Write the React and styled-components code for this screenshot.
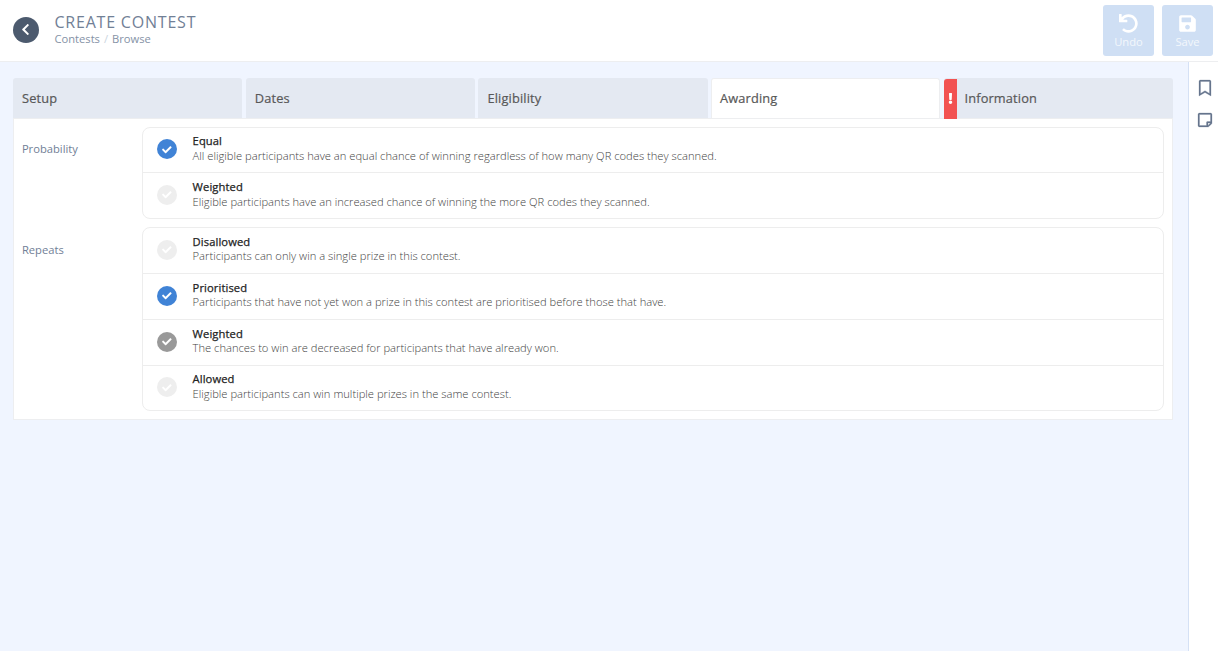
import React from 'react'
import styled, { createGlobalStyle } from 'styled-components'
import {
  FaCheck,
  FaChevronLeft,
  FaExclamation,
  FaRegBookmark,
  FaRegStickyNote,
  FaSave,
  FaUndo,
} from 'react-icons/fa'

const GlobalStyle = createGlobalStyle`
  * {
    box-sizing: border-box;
  }

  body {
    margin: 0;
    background: #f0f5ff;
    font-family: 'Open Sans', sans-serif;
    font-size: 11.2px;
    color: #718096;
  }
`

const Page = styled.div`
  display: flex;
  flex-direction: column;
  height: 100vh;
  overflow: hidden;
`

const Header = styled.header`
  display: flex;
  align-items: center;
  flex: none;
  height: 61.6px;
  padding: 0 5px 0 12.8px;
  background: white;
  border-bottom: 1px solid #edeef0;
`

const BackButton = styled.button`
  display: flex;
  align-items: center;
  justify-content: center;
  width: 26px;
  height: 26px;
  margin: 0 15.6px 1px 0;
  padding: 0 1px 1px 0;
  border: none;
  border-radius: 50%;
  background: #4c5a6e;
  color: white;
  font-size: 13px;
`

const Heading = styled.div`
  flex: 1;
  padding-bottom: 1px;
`

const Title = styled.h1`
  margin: 0;
  font-size: 16px;
  font-weight: 400;
  line-height: 18px;
  letter-spacing: 0.8px;
  text-transform: uppercase;
  color: #718096;
`

const Breadcrumb = styled.nav`
  display: flex;
  gap: 4px;
  font-size: 11.2px;
  line-height: 15px;
  color: #8592a6;
`

const Separator = styled.span`
  color: #cbd5e0;
`

const Actions = styled.div`
  display: flex;
  gap: 8px;
`

const ActionButton = styled.button`
  display: flex;
  flex-direction: column;
  align-items: center;
  width: 51px;
  height: 51px;
  padding: 9px 0 0;
  border: none;
  border-radius: 3px;
  background: #cfdff4;
  color: white;
  font-family: inherit;
  font-size: 11.2px;
  line-height: 15px;

  svg {
    margin-bottom: 1px;
    font-size: 19px;
  }

  span {
    opacity: 0.75;
  }
`

const Body = styled.div`
  display: flex;
  flex: 1;
`

const Main = styled.main`
  flex: 1;
  padding: 16px 15.1px 0 12.9px;
`

const Sidebar = styled.aside`
  display: flex;
  flex-direction: column;
  align-items: center;
  gap: 16px;
  width: 30px;
  padding: 18.4px 0 0 3px;
  border-left: 1px solid #d5e1f5;
  background: white;
  color: #66758d;
  font-size: 16px;

  svg {
    stroke: currentColor;
    stroke-width: 8px;
    overflow: visible;
  }
`

const Tabs = styled.div`
  display: grid;
  grid-template-columns: repeat(5, 1fr);
  gap: 3.5px;
`

const Tab = styled.div`
  display: flex;
  align-items: center;
  height: 40px;
  padding-left: ${(props) => (props.$alert ? '0' : props.$active ? '8px' : '9.2px')};
  border: ${(props) => (props.$active ? '1px solid #edeef0' : 'none')};
  border-bottom: none;
  border-radius: 3px 3px 0 0;
  background: ${(props) => (props.$active ? 'white' : '#e4e9f2')};
  color: #585858;
  font-size: 12.8px;
  letter-spacing: 0.14px;
  line-height: 18px;
  padding-bottom: ${(props) => (props.$active ? '1px' : '0')};
  -webkit-text-stroke: 0.2px currentColor;
`

const Alert = styled.span`
  display: flex;
  align-items: center;
  justify-content: center;
  align-self: stretch;
  width: 13px;
  margin: 1px 7.8px -1px 0;
  border-radius: 3px 0 0 0;
  background: #f25252;
  color: white;
  font-size: 11px;
`

const Panel = styled.div`
  display: flex;
  flex-direction: column;
  gap: 8px;
  padding: 8px;
  border: 1px solid #edeef0;
  background: white;
`

const Field = styled.div`
  display: grid;
  grid-template-columns: 120px 1fr;
`

const Label = styled.div`
  padding-top: 14.6px;
  line-height: 15px;
`

const Options = styled.div`
  border: 1px solid #ededed;
  border-radius: 8px;
`

const Option = styled.div`
  display: flex;
  align-items: center;
  height: 44.8px;
  padding: 0 0 1.3px 14.3px;

  & + & {
    height: 45.8px;
    border-top: 1px solid #ededed;
  }
`

const circleColors = {
  on: '#4083d6',
  implied: '#999999',
  off: '#eeeeee',
}

const Circle = styled.span`
  display: flex;
  align-items: center;
  justify-content: center;
  width: 20px;
  height: 20px;
  margin-right: 15.4px;
  border-radius: 50%;
  background: ${(props) => circleColors[props.$state]};
  color: white;
  font-size: 9.6px;
`

const OptionBody = styled.div`
  padding-bottom: 1.9px;
`

const OptionTitle = styled.div`
  margin-bottom: 0.4px;
  color: #222;
  letter-spacing: 0.1px;
  line-height: 15px;
  -webkit-text-stroke: 0.25px currentColor;
`

const OptionText = styled.div`
  color: #444;
  font-weight: 300;
  line-height: 14.5px;
`

const tabs = [
  { name: 'Setup' },
  { name: 'Dates' },
  { name: 'Eligibility' },
  { name: 'Awarding', active: true },
  { name: 'Information', alert: true },
]

const fields = [
  {
    label: 'Probability',
    options: [
      {
        title: 'Equal',
        text: 'All eligible participants have an equal chance of winning regardless of how many QR codes they scanned.',
        state: 'on',
      },
      {
        title: 'Weighted',
        text: 'Eligible participants have an increased chance of winning the more QR codes they scanned.',
        state: 'off',
      },
    ],
  },
  {
    label: 'Repeats',
    options: [
      {
        title: 'Disallowed',
        text: 'Participants can only win a single prize in this contest.',
        state: 'off',
      },
      {
        title: 'Prioritised',
        text: 'Participants that have not yet won a prize in this contest are prioritised before those that have.',
        state: 'on',
      },
      {
        title: 'Weighted',
        text: 'The chances to win are decreased for participants that have already won.',
        state: 'implied',
      },
      {
        title: 'Allowed',
        text: 'Eligible participants can win multiple prizes in the same contest.',
        state: 'off',
      },
    ],
  },
]

function App() {
  return (
    <Page>
      <GlobalStyle />
      <Header>
        <BackButton>
          <FaChevronLeft />
        </BackButton>
        <Heading>
          <Title>Create Contest</Title>
          <Breadcrumb>
            <span>Contests</span>
            <Separator>/</Separator>
            <span>Browse</span>
          </Breadcrumb>
        </Heading>
        <Actions>
          <ActionButton>
            <FaUndo />
            <span>Undo</span>
          </ActionButton>
          <ActionButton>
            <FaSave />
            <span>Save</span>
          </ActionButton>
        </Actions>
      </Header>

      <Body>
        <Main>
          <Tabs>
            {tabs.map((tab) => (
              <Tab key={tab.name} $active={tab.active} $alert={tab.alert}>
                {tab.alert && (
                  <Alert>
                    <FaExclamation />
                  </Alert>
                )}
                {tab.name}
              </Tab>
            ))}
          </Tabs>
          <Panel>
            {fields.map((field) => (
              <Field key={field.label}>
                <Label>{field.label}</Label>
                <Options>
                  {field.options.map((option) => (
                    <Option key={option.title}>
                      <Circle $state={option.state}>
                        <FaCheck />
                      </Circle>
                      <OptionBody>
                        <OptionTitle>{option.title}</OptionTitle>
                        <OptionText>{option.text}</OptionText>
                      </OptionBody>
                    </Option>
                  ))}
                </Options>
              </Field>
            ))}
          </Panel>
        </Main>
        <Sidebar>
          <FaRegBookmark />
          <FaRegStickyNote />
        </Sidebar>
      </Body>
    </Page>
  )
}

export default App
